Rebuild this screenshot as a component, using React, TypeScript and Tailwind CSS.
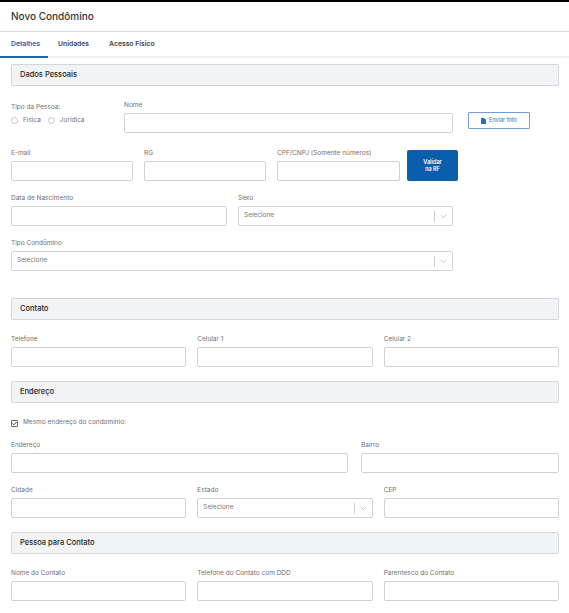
import React from "react";

const font = { fontFamily: "Inter, 'Noto Sans', sans-serif" };

function Label({ children }: { children: React.ReactNode }) {
  return (
    <div className="h-[8px] mb-[4px] text-[6.5px] leading-[8px] text-[#707070] whitespace-nowrap">
      {children}
    </div>
  );
}

function Input() {
  return <div className="h-[20px] border border-[#cfd2d6] rounded-[2px] bg-white" />;
}

function Select() {
  return (
    <div className="h-[20px] border border-[#cfd2d6] rounded-[2px] bg-white flex items-center pl-[5px] pr-[4px]">
      <span className="flex-1 text-[6.5px] text-[#777]">Selecione</span>
      <span className="w-px h-[11px] bg-[#cfcfcf] mr-[5px]" />
      <svg width="7" height="5" viewBox="0 0 7 5" className="mr-[1px]">
        <path d="M0.8 1 L3.5 3.6 L6.2 1" fill="none" stroke="#b5b5b5" strokeWidth="0.8" />
      </svg>
    </div>
  );
}

function Field({
  label,
  select,
  className = "",
}: {
  label: string;
  select?: boolean;
  className?: string;
}) {
  return (
    <div className={className}>
      <Label>{label}</Label>
      {select ? <Select /> : <Input />}
    </div>
  );
}

function Section({ title, className = "" }: { title: string; className?: string }) {
  return (
    <div
      className={`h-[22px] border border-[#d5d7da] rounded-[2px] bg-[#f2f3f5] flex items-center pl-[8px] text-[7.5px] font-medium text-[#222] ${className}`}
    >
      {title}
    </div>
  );
}

function Radio({ label }: { label: string }) {
  return (
    <div className="flex items-center gap-[5px]">
      <span className="w-[7px] h-[7px] rounded-full border border-[#c4c4c4] bg-white" />
      <span className="text-[6.5px] text-[#707070]">{label}</span>
    </div>
  );
}

export default function App() {
  return (
    <div className="w-[569px] h-[613px] bg-white overflow-hidden text-[#333]" style={font}>
      <div className="h-[2px] bg-black" />
      <div className="h-[30px] flex items-center pl-[11px] text-[10px] font-medium text-[#333] border-b border-[#dcdcdc]">
        Novo Condômino
      </div>
      <div className="h-[26px] flex items-stretch border-b-2 border-[#f1f1f1] text-[6.8px] font-semibold">
        <div className="w-[48px] flex items-center pl-[11px] text-[#1b63ad] border-b-2 border-[#1b63ad] -mb-[2px]">
          Detalhes
        </div>
        <div className="flex items-center ml-[10px] text-[#444]">Unidades</div>
        <div className="flex items-center ml-[20px] text-[#444]">Acesso Físico</div>
      </div>

      <div className="pl-[11px] pr-[10px] pt-[6px]">
        <Section title="Dados Pessoais" />

        {/* Row 1 */}
        <div className="flex items-start mt-[15px]">
          <div className="w-[102px] pt-[2px]">
            <div className="text-[6.5px] leading-[8px] text-[#707070]">Tipo da Pessoa:</div>
            <div className="flex items-center gap-[7px] mt-[5px]">
              <Radio label="Física" />
              <Radio label="Jurídica" />
            </div>
          </div>
          <Field label="Nome" className="ml-[11px] w-[329px]" />
          <div className="ml-[15px] mt-[11px] w-[62px] h-[17px] border border-[#6f9fd6] rounded-[1px] flex items-center justify-center gap-[3px]">
            <svg width="5" height="6" viewBox="0 0 5 6">
              <path d="M0 0 H3.2 L5 1.8 V6 H0 Z" fill="#2d6fb8" />
            </svg>
            <span className="text-[5.5px] text-[#2d6fb8]">Enviar foto</span>
          </div>
        </div>

        {/* Row 2 */}
        <div className="flex items-end mt-[16px]">
          <div className="flex gap-[11px]">
            <Field label="E-mail" className="w-[122px]" />
            <Field label="RG" className="w-[122px]" />
            <Field label="CPF/CNPJ (Somente números)" className="w-[123px]" />
          </div>
          <div className="ml-[7px] w-[51px] h-[31px] bg-[#0b5eab] rounded-[2px] flex items-center justify-center text-center text-[5.5px] leading-[7px] font-semibold text-white">
            Validar
            <br />
            na RF
          </div>
        </div>

        {/* Row 3 */}
        <div className="flex gap-[11px] mt-[13px]">
          <Field label="Data de Nascimento" className="w-[216px]" />
          <Field label="Sexo" select className="w-[215px]" />
        </div>

        {/* Row 4 */}
        <Field label="Tipo Condômino" select className="w-[442px] mt-[13px]" />

        <Section title="Contato" className="mt-[27px]" />
        <div className="grid grid-cols-3 gap-[11px] mt-[15px]">
          <Field label="Telefone" />
          <Field label="Celular 1" />
          <Field label="Celular 2" />
        </div>

        <Section title="Endereço" className="mt-[14px]" />
        <div className="flex items-center gap-[5px] mt-[15px] h-[10px]">
          <span className="w-[7px] h-[7px] border border-[#666] rounded-[1px] bg-white flex items-center justify-center">
            <svg width="6" height="5" viewBox="0 0 6 5">
              <path d="M0.6 2.4 L2.3 4 L5.4 0.8" fill="none" stroke="#222" strokeWidth="1.1" />
            </svg>
          </span>
          <span className="text-[6.5px] text-[#707070]">Mesmo endereço do condomínio:</span>
        </div>
        <div className="flex gap-[13px] mt-[13px]">
          <Field label="Endereço" className="w-[337px]" />
          <Field label="Bairro" className="flex-1" />
        </div>
        <div className="grid grid-cols-3 gap-[11px] mt-[13px]">
          <Field label="Cidade" />
          <Field label="Estado" select />
          <Field label="CEP" />
        </div>

        <Section title="Pessoa para Contato" className="mt-[14px]" />
        <div className="grid grid-cols-3 gap-[11px] mt-[15px]">
          <Field label="Nome do Contato" />
          <Field label="Telefone do Contato com DDD" />
          <Field label="Parentesco do Contato" />
        </div>
      </div>
    </div>
  );
}
